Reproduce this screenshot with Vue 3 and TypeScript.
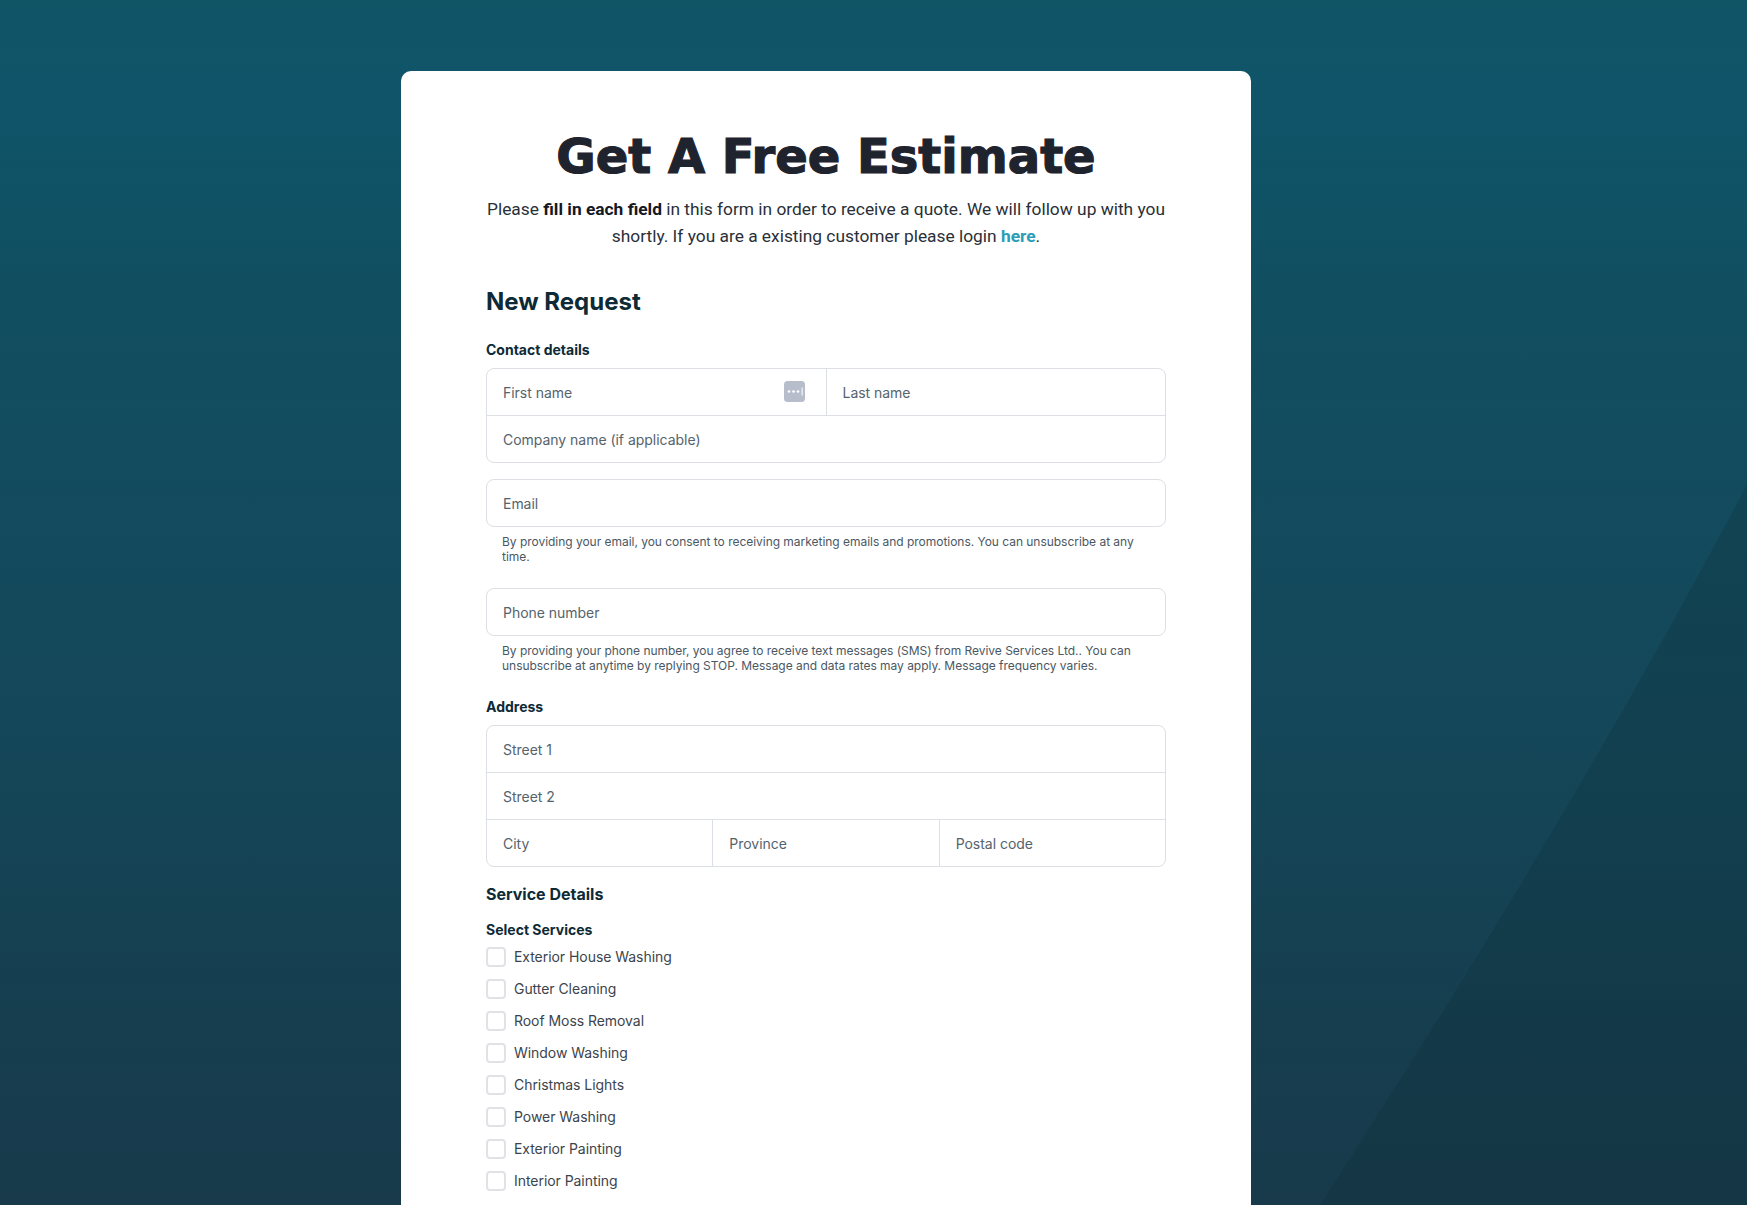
<script setup lang="ts">
const services: string[] = [
  'Exterior House Washing',
  'Gutter Cleaning',
  'Roof Moss Removal',
  'Window Washing',
  'Christmas Lights',
  'Power Washing',
  'Exterior Painting',
  'Interior Painting',
]
</script>

<template>
  <div class="page">
    <svg class="backdrop" viewBox="0 0 1747 1205" preserveAspectRatio="none" aria-hidden="true">
      <path d="M1747 485 Q1570 820 1320 1205 L1747 1205 Z" fill="#0a2a2c" fill-opacity="0.2" />
    </svg>
    <main class="card">
      <h1 class="title">Get A Free Estimate</h1>
      <p class="intro">
        Please <strong>fill in each field</strong> in this form in order to receive a quote. We will follow up with you
        shortly. If you are a existing customer please login <a class="link">here</a>.
      </p>

      <h2 class="request">New Request</h2>

      <div class="label contact-label">Contact details</div>
      <div class="group">
        <div class="row">
          <div class="field">
            <span>First name</span>
            <svg class="key" viewBox="0 0 21 21" aria-hidden="true">
              <rect width="21" height="21" rx="3.5" fill="#b7bdcb" />
              <circle cx="5" cy="10.5" r="1.35" fill="#fff" />
              <circle cx="9.5" cy="10.5" r="1.35" fill="#fff" />
              <circle cx="14" cy="10.5" r="1.35" fill="#fff" />
              <rect x="17.6" y="6.5" width="1" height="8" fill="#fff" />
            </svg>
          </div>
          <div class="field">Last name</div>
        </div>
        <div class="row"><div class="field">Company name (if applicable)</div></div>
      </div>

      <div class="group single email">
        <div class="row"><div class="field">Email</div></div>
      </div>
      <p class="hint">By providing your email, you consent to receiving marketing emails and promotions. You can unsubscribe at any time.</p>

      <div class="group single phone">
        <div class="row"><div class="field">Phone number</div></div>
      </div>
      <p class="hint">By providing your phone number, you agree to receive text messages (SMS) from Revive Services Ltd.. You can unsubscribe at anytime by replying STOP. Message and data rates may apply. Message frequency varies.</p>

      <div class="label address-label">Address</div>
      <div class="group">
        <div class="row"><div class="field">Street 1</div></div>
        <div class="row"><div class="field">Street 2</div></div>
        <div class="row">
          <div class="field">City</div>
          <div class="field">Province</div>
          <div class="field">Postal code</div>
        </div>
      </div>

      <h3 class="service">Service Details</h3>
      <div class="label select-label">Select Services</div>
      <ul class="checks">
        <li v-for="s in services" :key="s" class="check">
          <span class="box"></span>
          <span class="check-text">{{ s }}</span>
        </li>
      </ul>
    </main>
  </div>
</template>

<style scoped>
.page {
  position: relative;
  height: 1205px;
  overflow: hidden;
  background: linear-gradient(180deg, #105566 0%, #0f5469 9%, #114e5f 27%, #134c5f 36%, #144658 64%, #163e4f 85%, #183a4b 100%);
  font-family: Inter, "Liberation Sans", sans-serif;
  padding-top: 71px;
  box-sizing: border-box;
}
.backdrop {
  position: absolute;
  inset: 0;
  width: 100%;
  height: 100%;
}
.card {
  position: relative;
  width: 850px;
  margin-left: 401px;
  box-sizing: border-box;
  min-height: 1300px;
  padding: 55px 85px 40px;
  background: #fff;
  border-radius: 10px;
}
.title {
  margin: 0;
  text-align: center;
  font-family: "DejaVu Sans", Inter, sans-serif;
  font-size: 48px;
  line-height: 60px;
  font-weight: 700;
  color: #1f232e;
  -webkit-text-stroke: 1.2px #1f232e;
}
.intro {
  margin: 10px 0 0;
  text-align: center;
  font-family: Roboto, sans-serif;
  font-size: 17.35px;
  line-height: 27px;
  color: #2a2f38;
}
.intro strong {
  font-weight: 700;
  color: #14181f;
}
.link {
  color: #2a9db8;
  font-weight: 700;
}
.request {
  margin: 36px 0 0;
  font-size: 24px;
  line-height: 32px;
  font-weight: 700;
  color: #0d2a36;
}
.label {
  font-size: 14px;
  line-height: 20px;
  font-weight: 700;
  color: #0d2a36;
}
.contact-label { margin-top: 22px; }
.address-label { margin-top: 24px; }
.select-label { margin-top: 14px; }
.group {
  margin-top: 8px;
  border: 1px solid #dcdfe3;
  border-radius: 8px;
  overflow: hidden;
}
.group.email { margin-top: 16px; }
.group.phone { margin-top: 24px; }
.row {
  display: flex;
  height: 46px;
}
.row + .row {
  border-top: 1px solid #dcdfe3;
}
.field {
  flex: 1 1 0;
  display: flex;
  align-items: center;
  justify-content: space-between;
  padding: 0 21px 0 16px;
  font-size: 14px;
  color: #56636c;
  letter-spacing: -0.03px;
}
.field + .field {
  border-left: 1px solid #dcdfe3;
}
.key {
  width: 21px;
  height: 21px;
  margin-top: -1px;
}
.hint {
  margin: 7px 0 0;
  padding: 0 16px;
  font-size: 12px;
  line-height: 15px;
  color: #4a5863;
  letter-spacing: -0.03px;
}
.service {
  margin: 15px 0 0;
  font-size: 16px;
  line-height: 24px;
  font-weight: 700;
  color: #0d2a36;
}
.checks {
  list-style: none;
  margin: 7px 0 0;
  padding: 0;
  display: flex;
  flex-direction: column;
  gap: 12px;
}
.check {
  display: flex;
  align-items: center;
  gap: 8px;
  height: 20px;
  font-size: 14px;
  color: #3c444d;
  letter-spacing: -0.05px;
}
.check-text {
  margin-bottom: 2px;
}
.box {
  width: 20px;
  height: 20px;
  box-sizing: border-box;
  border: 2px solid #e0e2e5;
  border-radius: 4px;
}
</style>

<style>
html, body { margin: 0; overflow: hidden; }
</style>
